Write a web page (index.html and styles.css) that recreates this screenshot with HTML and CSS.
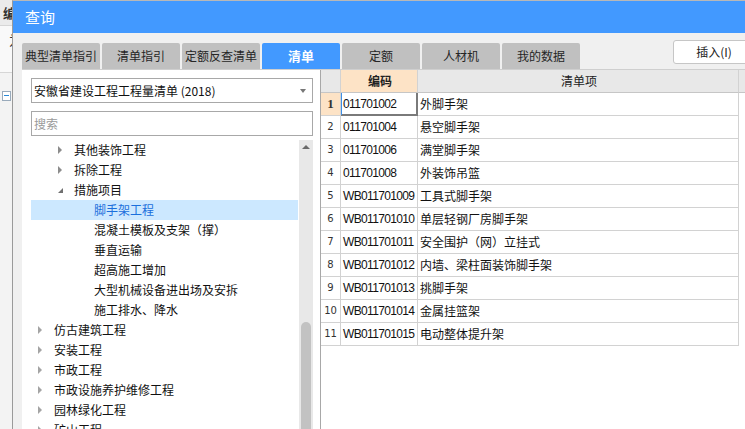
FILE: index.html
```html
<!DOCTYPE html>
<html lang="zh-CN">
<head>
<meta charset="utf-8">
<title>查询</title>
<link rel="stylesheet" href="styles.css">
</head>
<body>
<div class="bgapp">
  <div class="bg-top"><span>编</span></div>
  <div class="bg-mid"><span>为</span></div>
  <div class="bg-low"><span class="minus-box"></span></div>
</div>

<div class="dialog">
  <div class="titlebar">查询</div>
  <div class="dlg-body">
    <div class="tabbar">
      <div class="tabs">
        <div class="tab">典型清单指引</div>
        <div class="tab">清单指引</div>
        <div class="tab">定额反查清单</div>
        <div class="tab active">清单</div>
        <div class="tab">定额</div>
        <div class="tab">人材机</div>
        <div class="tab">我的数据</div>
      </div>
      <button class="insert">插入(I)</button>
    </div>

    <div class="content">
      <div class="left">
        <div class="select"><span>安徽省建设工程工程量清单 (2018)</span><i class="drop"></i></div>
        <div class="search">搜索</div>
        <div class="tree">
          <div class="tree-list">
            <div class="node l2"><i class="tri"></i>其他装饰工程</div>
            <div class="node l2"><i class="tri"></i>拆除工程</div>
            <div class="node l2"><i class="tri open"></i>措施项目</div>
            <div class="node l3 sel">脚手架工程</div>
            <div class="node l3">混凝土模板及支架（撑）</div>
            <div class="node l3">垂直运输</div>
            <div class="node l3">超高施工增加</div>
            <div class="node l3">大型机械设备进出场及安拆</div>
            <div class="node l3">施工排水、降水</div>
            <div class="node l1"><i class="tri"></i>仿古建筑工程</div>
            <div class="node l1"><i class="tri"></i>安装工程</div>
            <div class="node l1"><i class="tri"></i>市政工程</div>
            <div class="node l1"><i class="tri"></i>市政设施养护维修工程</div>
            <div class="node l1"><i class="tri"></i>园林绿化工程</div>
            <div class="node l1"><i class="tri"></i>矿山工程</div>
          </div>
          <div class="vscroll"><i class="up"></i><div class="thumb"></div></div>
        </div>
      </div>

      <div class="right">
        <div class="row head">
          <div class="c num"></div>
          <div class="c code hot">编码</div>
          <div class="c item">清单项</div>
          <div class="c extra"></div>
        </div>
        <div class="row">
          <div class="c num hot first">1</div>
          <div class="c code focus">011701002</div>
          <div class="c item">外脚手架</div>
          <div class="c extra"></div>
        </div>
        <div class="row"><div class="c num">2</div><div class="c code">011701004</div><div class="c item">悬空脚手架</div><div class="c extra"></div></div>
        <div class="row"><div class="c num">3</div><div class="c code">011701006</div><div class="c item">满堂脚手架</div><div class="c extra"></div></div>
        <div class="row"><div class="c num">4</div><div class="c code">011701008</div><div class="c item">外装饰吊篮</div><div class="c extra"></div></div>
        <div class="row"><div class="c num">5</div><div class="c code">WB011701009</div><div class="c item">工具式脚手架</div><div class="c extra"></div></div>
        <div class="row"><div class="c num">6</div><div class="c code">WB011701010</div><div class="c item">单层轻钢厂房脚手架</div><div class="c extra"></div></div>
        <div class="row"><div class="c num">7</div><div class="c code">WB011701011</div><div class="c item">安全围护（网）立挂式</div><div class="c extra"></div></div>
        <div class="row"><div class="c num">8</div><div class="c code">WB011701012</div><div class="c item">内墙、梁柱面装饰脚手架</div><div class="c extra"></div></div>
        <div class="row"><div class="c num">9</div><div class="c code">WB011701013</div><div class="c item">挑脚手架</div><div class="c extra"></div></div>
        <div class="row"><div class="c num">10</div><div class="c code">WB011701014</div><div class="c item">金属挂篮架</div><div class="c extra"></div></div>
        <div class="row"><div class="c num">11</div><div class="c code">WB011701015</div><div class="c item">电动整体提升架</div><div class="c extra"></div></div>
      </div>
    </div>
  </div>
</div>
</body>
</html>
```

FILE: styles.css
```css
* { box-sizing: border-box; }
html, body { margin: 0; padding: 0; }
body {
  width: 745px;
  height: 429px;
  overflow: hidden;
  position: relative;
  background: #f3f3f3;
  font-family: "Noto Sans CJK SC", "Liberation Sans", sans-serif;
  font-size: 12px;
  color: #222;
}

/* background application strip */
.bgapp { width: 12px; height: 429px; overflow: hidden; background: #f3f3f3; }
.bg-top {
  height: 26px; background: #ebebeb; border-bottom: 1px solid #d6d6d6;
  padding: 5px 0 0 3px; font-size: 13px; line-height: 16px; font-weight: bold; color: #333;
}
.bg-mid {
  height: 47px; background: #f9f9f9; border-bottom: 1px solid #d6d6d6;
  padding: 6px 0 0 9px; font-size: 13px; line-height: 16px; color: #333;
}
.bg-low { padding: 18px 0 0 2px; }
.minus-box {
  display: block; width: 9px; height: 10px; border: 1px solid #9ab; background: #fff; position: relative;
}
.minus-box::after {
  content: ""; position: absolute; left: 1px; right: 1px; top: 3px; height: 1px; background: #2a8ad8;
}

/* dialog window */
.dialog {
  position: absolute;
  left: 12px;
  top: 0;
  width: 760px;
  height: 429px;
  overflow: hidden;
  background: #f0f0f0;
  border-left: 1px solid #9a9a9a;
  border-top: 1px solid #b8b8b8;
  display: flex;
  flex-direction: column;
}
.titlebar {
  height: 32px;
  flex: none;
  background: #4299ff;
  color: #fff;
  font-size: 15px;
  line-height: 32px;
  padding-left: 12px;
}
.dlg-body {
  flex: 1;
  display: flex;
  flex-direction: column;
  padding: 10px 0 0 9px;
  min-height: 0;
}
.tabbar { display: flex; height: 26px; flex: none; }
.tabs { display: flex; gap: 2px; }
.tab {
  width: 78px;
  height: 26px;
  background: #c0c0c0;
  border-radius: 2px 2px 0 0;
  text-align: center;
  line-height: 26px;
  font-size: 12px;
  color: #262626;
}
.tab.active { background: #4299ff; color: #fff; font-weight: bold; font-size: 13px; }
.insert {
  margin: -3px 0 0 93px;
  width: 76px;
  height: 24px;
  background: #fff;
  border: 1px solid #c6c6c6;
  border-radius: 3px;
  font-family: "Noto Sans CJK SC", "Liberation Sans", sans-serif;
  font-size: 12px;
  color: #222;
  padding: 0 0 0 6px;
  text-align: center;
  line-height: 20px;
}

.content {
  flex: 1;
  display: flex;
  border-top: 1px solid #cfcfcf;
  min-height: 0;
}

/* left panel */
.left {
  width: 298px;
  background: #fff;
  padding: 8px 0 0 9px;
  display: flex;
  flex-direction: column;
  min-height: 0;
}
.select {
  width: 282px;
  height: 25px;
  flex: none;
  border: 1px solid #a8a8a8;
  display: flex;
  align-items: center;
  justify-content: space-between;
  padding: 0 6px 0 2px;
  font-size: 12px;
  color: #111;
}
.drop {
  width: 0; height: 0;
  border-left: 3px solid transparent;
  border-right: 3px solid transparent;
  border-top: 4px solid #777;
}
.search {
  margin-top: 8px;
  width: 282px;
  height: 25px;
  flex: none;
  border: 1px solid #a8a8a8;
  padding-left: 2px;
  line-height: 23px;
  font-size: 12px;
  color: #9a9a9a;
}
.tree { margin-top: 4px; flex: 1; display: flex; min-height: 0; overflow: hidden; }
.tree-list { width: 268px; }
.node {
  height: 20px;
  line-height: 20px;
  font-size: 12px;
  color: #111;
  position: relative;
  white-space: nowrap;
}
.node.l1 { padding-left: 23px; }
.node.l2 { padding-left: 43px; }
.node.l3 { padding-left: 63px; }
.node.sel { background: #cce8ff; color: #1b6fdc; margin-right: 1px; }
.tri {
  position: absolute;
  top: 6px;
  width: 0; height: 0;
  border-top: 4px solid transparent;
  border-bottom: 4px solid transparent;
  border-left: 4px solid #8c8c8c;
}
.l1 .tri { left: 7px; border-left-color: #a4a4a4; }
.l2 .tri { left: 27px; }
.tri.open {
  top: 8px;
  border-top: 0;
  border-left: 5px solid transparent;
  border-bottom: 5px solid #707070;
}
.vscroll {
  width: 14px;
  background: #e8e8e8;
  position: relative;
}
.up {
  position: absolute;
  left: 3px; top: 5px;
  width: 0; height: 0;
  border-left: 4px solid transparent;
  border-right: 4px solid transparent;
  border-bottom: 4px solid #6a6a6a;
}
.thumb {
  position: absolute;
  left: 2px; top: 182px;
  width: 10px; height: 140px;
  border-radius: 5px;
  background: #c2c2c2;
}

/* right grid */
.right {
  flex: 1;
  background: #fff;
  border-left: 1px solid #a8a8a8;
}
.row {
  display: grid;
  grid-template-columns: 20px 77px 321px 1fr;
  height: 23px;
}
.c {
  border-right: 1px solid #d2d2d2;
  border-bottom: 1px solid #d2d2d2;
  line-height: 22px;
  white-space: nowrap;
  overflow: hidden;
}
.extra { border-right: 0; }
.row:not(.head) .extra { border-bottom: 0; border-left: 0; }
.head .c {
  background: #e8e8e8;
  border-bottom-color: #c6c6c6;
  text-align: center;
  font-size: 12px;
  color: #222;
}
.head .code.hot { background: #fde3c6; font-weight: bold; font-family: "Noto Sans CJK SC", sans-serif; letter-spacing: 0; font-size: 12px; }
.num {
  background: #fff;
  text-align: center;
  font-family: "DejaVu Sans", sans-serif;
  font-size: 10px;
  color: #333;
}
.num.hot { background: #fde3c6; }
.num.first { font-weight: bold; font-family: "Liberation Serif", serif; font-size: 13px; }
.code {
  padding-left: 2px;
  font-family: "Liberation Sans", sans-serif;
  font-size: 12px;
  letter-spacing: -0.65px;
  color: #111;
}
.code.focus {
  box-shadow: inset 1px 0 0 #3d8fe6, inset -1px -1px 0 #7a7a7a;
  border-right-color: #7a7a7a;
  border-bottom-color: #7a7a7a;
}
.item { padding-left: 2px; font-size: 12px; color: #111; }
```
